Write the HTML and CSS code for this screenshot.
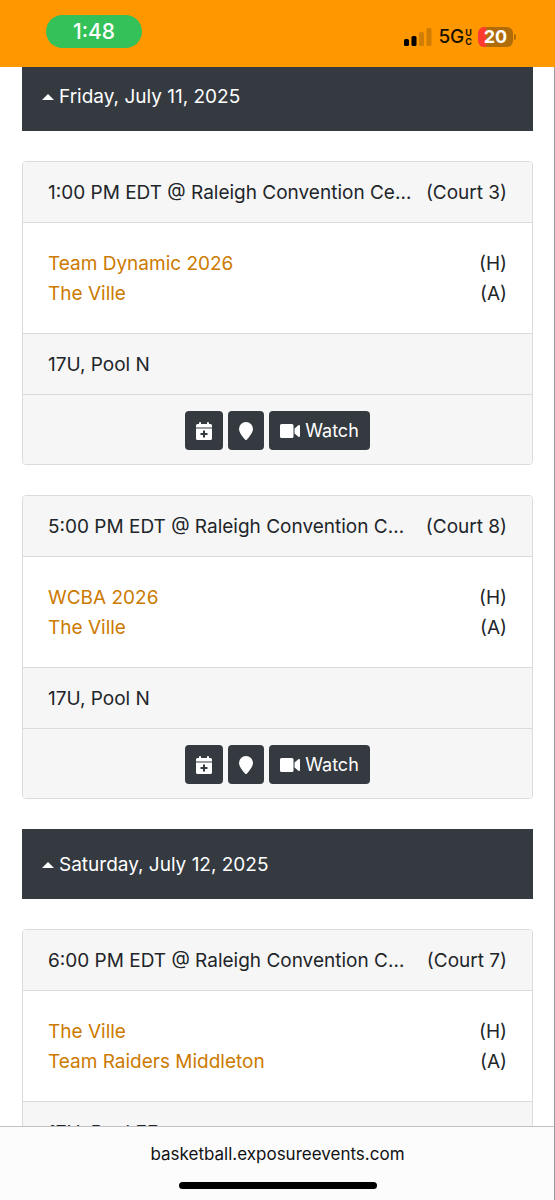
FILE: index.html
```html
<!DOCTYPE html>
<html lang="en">

<head>
    <meta charset="UTF-8">
    <meta name="viewport" content="width=device-width, initial-scale=1.0">
    <title>Schedule</title>

    <link rel="stylesheet" href="styles.css">
</head>

<body>
    <svg class="sprite" aria-hidden="true">
        <symbol id="icon-calendar" viewBox="0 0 16 18">
            <path fill="currentColor" fill-rule="evenodd" d="M3 1a1 1 0 0 1 2 0v1h6V1a1 1 0 0 1 2 0v1h1.500a1.500 1.500 0 0 1 1.500 1.500V5.500H0V3.500A1.500 1.500 0 0 1 1.500 2H3zM0 6.500h16v10a1.500 1.500 0 0 1-1.500 1.500h-13A1.500 1.500 0 0 1 0 16.500zM7 8.500V11H4.500v2H7v2.500h2V13h2.500v-2H9V8.500z"/>
        </symbol>
        <symbol id="icon-marker" viewBox="0 0 14 18">
            <path fill="currentColor" d="M7 0a7 7 0 0 1 7 7c0 3.200-4 8.300-6 10.600a1.300 1.300 0 0 1-2 0C4 15.300 0 10.200 0 7a7 7 0 0 1 7-7z"/>
        </symbol>
        <symbol id="icon-video" viewBox="0 0 20 14">
            <path fill="currentColor" d="M1.500 0h10.500A1.500 1.500 0 0 1 13.500 1.500v11A1.500 1.500 0 0 1 12 14H1.500A1.500 1.500 0 0 1 0 12.500v-11A1.500 1.500 0 0 1 1.500 0zM14.500 4.500 18.400 1.200C19 .7 20 1 20 2v10c0 1-1 1.300-1.600.8L14.500 9.500z"/>
        </symbol>
    </svg>

    <header class="status-bar">
        <span class="clock">1:48</span>
        <div class="status-icons">
            <svg class="signal" viewBox="0 0 28 18" aria-hidden="true">
                <rect x="0" y="11" width="5" height="7" rx="1.500"/>
                <rect x="7.500" y="8" width="5" height="10" rx="1.500"/>
                <rect class="dim" x="15" y="4" width="5" height="14" rx="1.500"/>
                <rect class="dim" x="22.500" y="0" width="5" height="18" rx="1.500"/>
            </svg>
            <span class="network">5G</span>
            <span class="network-type"><span>U</span><span>C</span></span>
            <span class="battery">20</span>
        </div>
    </header>

    <main class="schedule">
        <h2 class="date"><span class="caret"></span>Friday, July 11, 2025</h2>

        <section class="card">
            <div class="card-header">
                <span class="venue">1:00 PM EDT @ Raleigh Convention Center</span>
                <span>(Court 3)</span>
            </div>
            <div class="card-body">
                <div class="team"><a href="#">Team Dynamic 2026</a><span>(H)</span></div>
                <div class="team"><a href="#">The Ville</a><span>(A)</span></div>
            </div>
            <div class="card-footer">17U, Pool N</div>
            <div class="card-actions">
                <button class="btn" type="button" aria-label="Add to calendar"><svg class="calendar"><use href="#icon-calendar"/></svg></button>
                <button class="btn" type="button" aria-label="Map"><svg class="marker"><use href="#icon-marker"/></svg></button>
                <button class="btn" type="button"><svg class="video"><use href="#icon-video"/></svg>Watch</button>
            </div>
        </section>

        <section class="card">
            <div class="card-header">
                <span class="venue">5:00 PM EDT @ Raleigh Convention Center</span>
                <span>(Court 8)</span>
            </div>
            <div class="card-body">
                <div class="team"><a href="#">WCBA 2026</a><span>(H)</span></div>
                <div class="team"><a href="#">The Ville</a><span>(A)</span></div>
            </div>
            <div class="card-footer">17U, Pool N</div>
            <div class="card-actions">
                <button class="btn" type="button" aria-label="Add to calendar"><svg class="calendar"><use href="#icon-calendar"/></svg></button>
                <button class="btn" type="button" aria-label="Map"><svg class="marker"><use href="#icon-marker"/></svg></button>
                <button class="btn" type="button"><svg class="video"><use href="#icon-video"/></svg>Watch</button>
            </div>
        </section>

        <h2 class="date"><span class="caret"></span>Saturday, July 12, 2025</h2>

        <section class="card">
            <div class="card-header">
                <span class="venue">6:00 PM EDT @ Raleigh Convention Center</span>
                <span>(Court 7)</span>
            </div>
            <div class="card-body">
                <div class="team"><a href="#">The Ville</a><span>(H)</span></div>
                <div class="team"><a href="#">Team Raiders Middleton</a><span>(A)</span></div>
            </div>
            <div class="card-footer">17U, Pool EE</div>
        </section>
    </main>

    <footer class="address-bar">
        <span>basketball.exposureevents.com</span>
        <div class="home-indicator"></div>
    </footer>
</body>

</html>
```

FILE: styles.css
```css
* {
    box-sizing: border-box;
    margin: 0;
    padding: 0;
}

body {
    height: 100vh;
    overflow: hidden;
    background-color: #fff;
    color: #212529;
    font-family: Inter, "Liberation Sans", sans-serif;
    font-size: 19px;
    line-height: 30px;
}

/* thin line down the right edge of the window */
body::after {
    content: "";
    position: fixed;
    top: 67px;
    right: 0;
    bottom: 0;
    width: 1px;
    background-color: #999b9d;
    z-index: 2;
}

.sprite {
    display: none;
}

/* status bar */
.status-bar {
    position: fixed;
    top: 0;
    left: 0;
    right: 0;
    z-index: 1;
    display: flex;
    justify-content: space-between;
    align-items: flex-start;
    height: 67px;
    padding: 15px 42px 0 46px;
    background-color: #ff9800;
}

.clock {
    width: 96px;
    height: 33px;
    border-radius: 17px;
    background-color: #34c159;
    color: #fff;
    font-size: 21px;
    font-weight: 500;
    line-height: 34px;
    text-align: center;
}

.status-icons {
    display: flex;
    align-items: center;
    height: 44px;
    color: #1a1000;
}

.signal {
    width: 28px;
    height: 18px;
    margin-right: 6px;
}

.signal .dim {
    fill: #cf7d05;
}

.network {
    font-size: 19px;
    font-weight: 500;
}

.network-type {
    display: flex;
    flex-direction: column;
    margin: 0 6px 0 1px;
    font-size: 9px;
    font-weight: 700;
    line-height: 9px;
}

.battery {
    position: relative;
    width: 35px;
    height: 20px;
    border-radius: 6px;
    background: linear-gradient(to right, #ff3b30 8px, #b06c08 8px);
    color: #fff;
    font-size: 18px;
    font-weight: 700;
    line-height: 20px;
    text-align: center;
}

.battery::after {
    content: "";
    position: absolute;
    top: 7px;
    right: -3px;
    width: 2px;
    height: 6px;
    border-radius: 0 2px 2px 0;
    background-color: #b06c08;
}

/* schedule */
.schedule {
    display: flex;
    flex-direction: column;
    gap: 30px;
    padding: 61px 22px 0;
}

.date {
    display: flex;
    align-items: center;
    flex-shrink: 0;
    gap: 5px;
    height: 70px;
    padding: 2px 20px 0;
    background-color: #343a40;
    color: #fff;
    font-size: 19px;
    font-weight: 400;
}

.caret {
    border: 6px solid transparent;
    border-top: 0;
    border-bottom-color: #fff;
}

.card {
    flex-shrink: 0;
    border: 1px solid #dbdbdb;
    border-radius: 4px;
    background-color: #fff;
    overflow: hidden;
}

.card-header {
    display: flex;
    justify-content: space-between;
    gap: 14px;
    padding: 16px 25px 14px;
    border-bottom: 1px solid #dbdbdb;
    background-color: #f6f6f6;
    white-space: nowrap;
}

.venue {
    overflow: hidden;
    text-overflow: ellipsis;
}

.card-body {
    padding: 26px 25px 24px;
}

.team {
    display: flex;
    justify-content: space-between;
}

.team a {
    color: #cc7a00;
    text-decoration: none;
}

.card-footer,
.card-actions {
    padding: 16px 25px 14px;
    border-top: 1px solid #dbdbdb;
    background-color: #f6f6f6;
}

.card-actions {
    display: flex;
    justify-content: center;
    gap: 5px;
}

.btn {
    display: flex;
    align-items: center;
    gap: 5px;
    height: 39px;
    padding: 0 11px;
    border: 0;
    border-radius: 4px;
    background-color: #343a40;
    color: #fff;
    font-family: inherit;
    font-size: 18px;
}

.calendar {
    width: 16px;
    height: 18px;
}

.marker {
    width: 14px;
    height: 18px;
}

.video {
    width: 20px;
    height: 14px;
}

/* browser bar at the bottom */
.address-bar {
    position: fixed;
    left: 0;
    right: 0;
    bottom: 0;
    z-index: 1;
    display: flex;
    flex-direction: column;
    align-items: center;
    gap: 13px;
    height: 74px;
    padding-top: 12px;
    border-top: 1px solid #c2c2c4;
    background-color: #fcfcfd;
    color: #111;
    font-size: 17px;
}

.home-indicator {
    width: 198px;
    height: 7px;
    border-radius: 4px;
    background-color: #000;
}
```
